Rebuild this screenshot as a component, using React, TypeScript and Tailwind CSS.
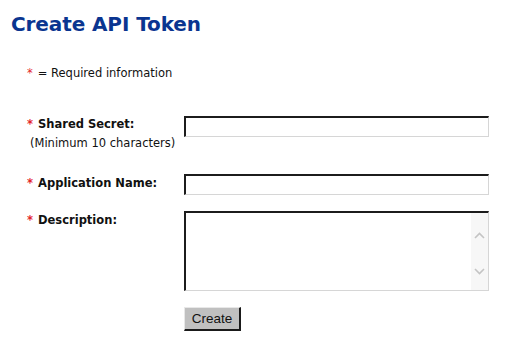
import React from "react";

const Star = () => <span className="text-[#e3262c] mr-[5px]">*</span>;

const TextBox = () => (
  <input
    type="text"
    className="block w-[305px] h-[21px] bg-white border-solid border-t-2 border-l-2 border-r border-b border-t-[#1c1c1c] border-l-[#1c1c1c] border-r-[#d6d6d6] border-b-[#d6d6d6] outline-none"
  />
);

const Chevron = ({ up }: { up?: boolean }) => (
  <svg width="11" height="7" viewBox="0 0 11 7" fill="none">
    <path
      d={up ? "M1 6 L5.5 1.5 L10 6" : "M1 1 L5.5 5.5 L10 1"}
      stroke="#c4c4c4"
      strokeWidth="1.6"
    />
  </svg>
);

export default function App() {
  return (
    <div className="w-[520px] h-[337px] bg-white text-[#111] font-['DejaVu_Sans',Verdana,sans-serif] text-[11.5px]">
      <h1 className="pl-[11px] pt-[10px] text-[20px] leading-[28px] font-bold text-[#0a3590] tracking-[-0.1px]">
        Create API Token
      </h1>

      <div className="pl-[27px] mt-[28px] leading-[14px]">
        <Star />= Required information
      </div>

      <div className="grid grid-cols-[157px_305px] pl-[27px] mt-[36px] gap-y-[16px]">
        <div className="pt-[1px] pb-[8px] leading-[14px]">
          <div className="font-bold">
            <Star />
            Shared Secret:
          </div>
          <div className="pl-[3px] mt-[5px]">(Minimum 10 characters)</div>
        </div>
        <div>
          <TextBox />
        </div>

        <div className="pt-[2px] leading-[14px] font-bold">
          <Star />
          Application Name:
        </div>
        <div>
          <TextBox />
        </div>

        <div className="pt-[2px] leading-[14px] font-bold">
          <Star />
          Description:
        </div>
        <div className="flex w-[305px] h-[80px] bg-white border-solid border-t-2 border-l-2 border-r border-b border-t-[#1c1c1c] border-l-[#1c1c1c] border-r-[#d6d6d6] border-b-[#d6d6d6]">
          <textarea className="flex-1 resize-none outline-none border-0 bg-white" />
          <div className="w-[17px] bg-[#f7f7f7] flex flex-col items-center justify-between pt-[19px] pb-[15px]">
            <Chevron up />
            <Chevron />
          </div>
        </div>

        <div />
        <div>
          <button className="w-[57px] h-[24px] bg-[#c0c0c0] border-solid border-t border-l border-r-2 border-b-2 border-t-[#e8e8e8] border-l-[#e8e8e8] border-r-[#1a1a1a] border-b-[#1a1a1a] font-['Liberation_Sans',Arial,sans-serif] text-[13.5px] text-[#111] leading-none">
            Create
          </button>
        </div>
      </div>
    </div>
  );
}
